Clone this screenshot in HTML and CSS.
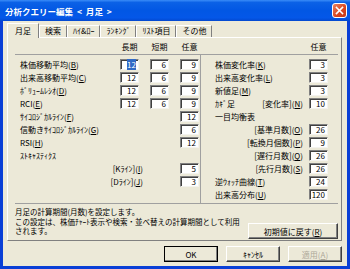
FILE: index.html
```html
<!DOCTYPE html>
<html lang="ja">
<head>
  <meta charset="UTF-8" />
  <title>分析クエリー編集</title>
  <link rel="stylesheet" href="styles.css">
</head>
<body>
  <div class="window">
    <div class="titlebar">
      <span class="title">分析クエリー編集 &lt; 月足 &gt;</span>
      <span class="close">
        <svg width="15" height="15" viewBox="0 0 15 15">
          <path d="M4.5 4.5 L10.5 10.5 M10.5 4.5 L4.5 10.5" stroke="#fff" stroke-width="1.6" stroke-linecap="square"/>
        </svg>
      </span>
    </div>

    <div class="frame">
      <!-- tab strip -->
      <div class="tabs">
        <span class="tab active">月足</span>
        <span class="tab">検索</span>
        <span class="tab">ﾊｲ&amp;ﾛｰ</span>
        <span class="tab">ﾗﾝｷﾝｸﾞ</span>
        <span class="tab">ﾘｽﾄ項目</span>
        <span class="tab">その他</span>
      </div>

      <div class="page">
        <div class="head">
          <div class="head-left">
            <span></span><span>長期</span><span>短期</span><span>任意</span>
          </div>
          <div class="head-right"><span>任意</span></div>
        </div>

        <div class="cols">
          <div class="left">
            <span>株価移動平均(<u>B</u>)</span>
            <span class="field"><span class="sel">12</span></span>
            <span class="field">6</span>
            <span class="field">9</span>

            <span>出来高移動平均(<u>C</u>)</span>
            <span class="field">12</span>
            <span class="field">6</span>
            <span class="field">9</span>

            <span>ﾎﾞﾘｭｰﾑﾚｼｵ(<u>D</u>)</span>
            <span class="field">12</span>
            <span class="field">6</span>
            <span class="field">9</span>

            <span>RCI(<u>E</u>)</span>
            <span class="field">12</span>
            <span class="field">6</span>
            <span class="field">9</span>

            <span class="wide">ｻｲｺﾛｼﾞｶﾙﾗｲﾝ(<u>F</u>)</span>
            <span class="field">12</span>

            <span class="wide">信動きｻｲｺﾛｼﾞｶﾙﾗｲﾝ(<u>G</u>)</span>
            <span class="field">6</span>

            <span class="wide">RSI(<u>H</u>)</span>
            <span class="field">12</span>

            <span class="full">ｽﾄｷｬｽﾃｨｸｽ</span>

            <span class="wide sub">[Kﾗｲﾝ](<u>I</u>)</span>
            <span class="field">5</span>

            <span class="wide sub">[Dﾗｲﾝ](<u>J</u>)</span>
            <span class="field">3</span>
          </div>

          <div class="right">
            <span>株価変化率(<u>K</u>)</span>
            <span class="field">3</span>

            <span>出来高変化率(<u>L</u>)</span>
            <span class="field">3</span>

            <span>新値足(<u>M</u>)</span>
            <span class="field">3</span>

            <span class="split"><span>ｶｷﾞ足</span><span>[変化率](<u>N</u>)</span></span>
            <span class="field">10</span>

            <span class="full">一目均衡表</span>

            <span class="sub">[基準月数](<u>O</u>)</span>
            <span class="field">26</span>

            <span class="sub">[転換月個数](<u>P</u>)</span>
            <span class="field">9</span>

            <span class="sub">[遅行月数](<u>Q</u>)</span>
            <span class="field">26</span>

            <span class="sub">[先行月数](<u>S</u>)</span>
            <span class="field">26</span>

            <span>逆ｳｫｯﾁ曲線(<u>T</u>)</span>
            <span class="field">24</span>

            <span>出来高分布(<u>U</u>)</span>
            <span class="field">120</span>
          </div>
        </div>

        <div class="note">
          <p>月足の計算期間(月数)を設定します。<br>この設定は、株価ﾁｬｰﾄ表示や検索・並べ替えの計算期間として利用<br>されます。</p>
          <button class="btn reset">初期値に戻す(<u>R</u>)</button>
        </div>
      </div>

      <div class="actions">
        <button class="btn default">OK</button>
        <button class="btn">ｷｬﾝｾﾙ</button>
        <button class="btn" disabled>適用(<u>A</u>)</button>
      </div>
    </div>
  </div>
</body>
</html>
```

FILE: styles.css
```css
* {
  box-sizing: border-box;
}

body {
  margin: 0;
  font-family: "Noto Sans CJK JP", "Noto Sans", sans-serif;
  font-size: 8px;
  color: #000;
  background: #fff;
}

u {
  text-decoration: underline;
}

.window {
  width: 350px;
  height: 269px;
  display: flex;
  flex-direction: column;
}

.titlebar {
  height: 21px;
  display: flex;
  align-items: center;
  justify-content: space-between;
  padding: 0 3px 0 5px;
  background: linear-gradient(#3a8cf8 0%, #0b61e6 12%, #0257e4 50%, #0457e8 85%, #0348cf 100%);
  color: #fff;
  font-weight: bold;
  font-size: 8.5px;
  word-spacing: 2px;
}

.close {
  width: 15px;
  height: 15px;
  border: 1px solid #fff;
  border-radius: 3px;
  background: linear-gradient(135deg, #e9825f, #d9451f 60%, #c23a17);
  display: flex;
}

.close svg {
  margin: -1px;
}

.frame {
  flex: 1;
  display: flex;
  flex-direction: column;
  background: #ece9d8;
  border: 3px solid #0a3fd6;
  border-top: none;
  padding: 2px 5px 0 4px;
}

/* tabs */
.tabs {
  display: flex;
  align-items: flex-end;
  height: 14px;
}

.tab {
  height: 12px;
  padding: 0 5px;
  line-height: 10px;
  border-top: 1px solid #fff;
  border-left: 1px solid #fff;
  border-right: 1px solid #808080;
}

.tab.active {
  position: relative;
  z-index: 1;
  height: 15px;
  margin-bottom: -1px;
  padding: 0 7px;
  line-height: 13px;
  background: #ece9d8;
}

.page {
  height: 204px;
  display: flex;
  flex-direction: column;
  border: 1px solid;
  border-color: #fff #808080 #808080 #fff;
  padding: 0 3px 0 7px;
}

.head {
  display: flex;
  height: 17px;
  border-bottom: 1px solid #a0a0a0;
}

.head-left,
.left {
  width: 186px;
  display: grid;
  grid-template-columns: 89px 19px 19px 19px;
  column-gap: 11px;
  padding-left: 5px;
  align-items: center;
}

.head-left span,
.head-right span {
  text-align: center;
}

.head-right {
  flex: 1;
  display: flex;
  align-items: center;
  justify-content: flex-end;
  padding-right: 10px;
}

.head-right span {
  width: 19px;
}

.cols {
  display: flex;
  height: 149px;
  border-bottom: 1px solid #a0a0a0;
}

.left {
  border-right: 1px solid #a0a0a0;
  grid-auto-rows: 13px;
  align-content: start;
  padding-top: 3px;
}

.right {
  flex: 1;
  display: grid;
  grid-template-columns: 1fr 19px;
  column-gap: 6px;
  grid-auto-rows: 13px;
  align-items: center;
  align-content: start;
  padding: 3px 10px 0 14px;
}

.left .wide {
  grid-column: 1 / 4;
}

.left .full,
.right .full {
  grid-column: 1 / -1;
}

.left .sub {
  text-align: right;
  padding-right: 26px;
}

.right .sub {
  text-align: right;
}

.split {
  display: flex;
  justify-content: space-between;
}

.field {
  height: 11px;
  background: #fff;
  border: 1px solid;
  border-color: #808080 #f4f3ee #f4f3ee #808080;
  box-shadow: inset 1px 1px 0 #404040;
  text-align: right;
  padding-right: 2px;
  line-height: 9px;
}

.sel {
  background: #316ac5;
  color: #fff;
}

.note {
  flex: 1;
  display: flex;
  justify-content: space-between;
  align-items: flex-start;
  padding-top: 3px;
}

.note p {
  margin: 0;
  font-size: 7.5px;
  line-height: 9.5px;
  white-space: nowrap;
}

.btn {
  height: 16px;
  padding: 0;
  font-family: inherit;
  font-size: 8px;
  color: #000;
  background: #ece9d8;
  border: 1px solid;
  border-color: #fff #404040 #404040 #fff;
  box-shadow: inset -1px -1px 0 #808080;
}

.btn:disabled {
  color: #aca899;
}

.btn.default {
  outline: 1px solid #000;
  outline-offset: -1px;
}

.reset {
  width: 90px;
  flex-shrink: 0;
  margin-top: 16px;
}

.actions {
  display: flex;
  justify-content: flex-end;
  gap: 8px;
  margin-top: 5px;
}

.actions .btn {
  width: 54px;
}
```
